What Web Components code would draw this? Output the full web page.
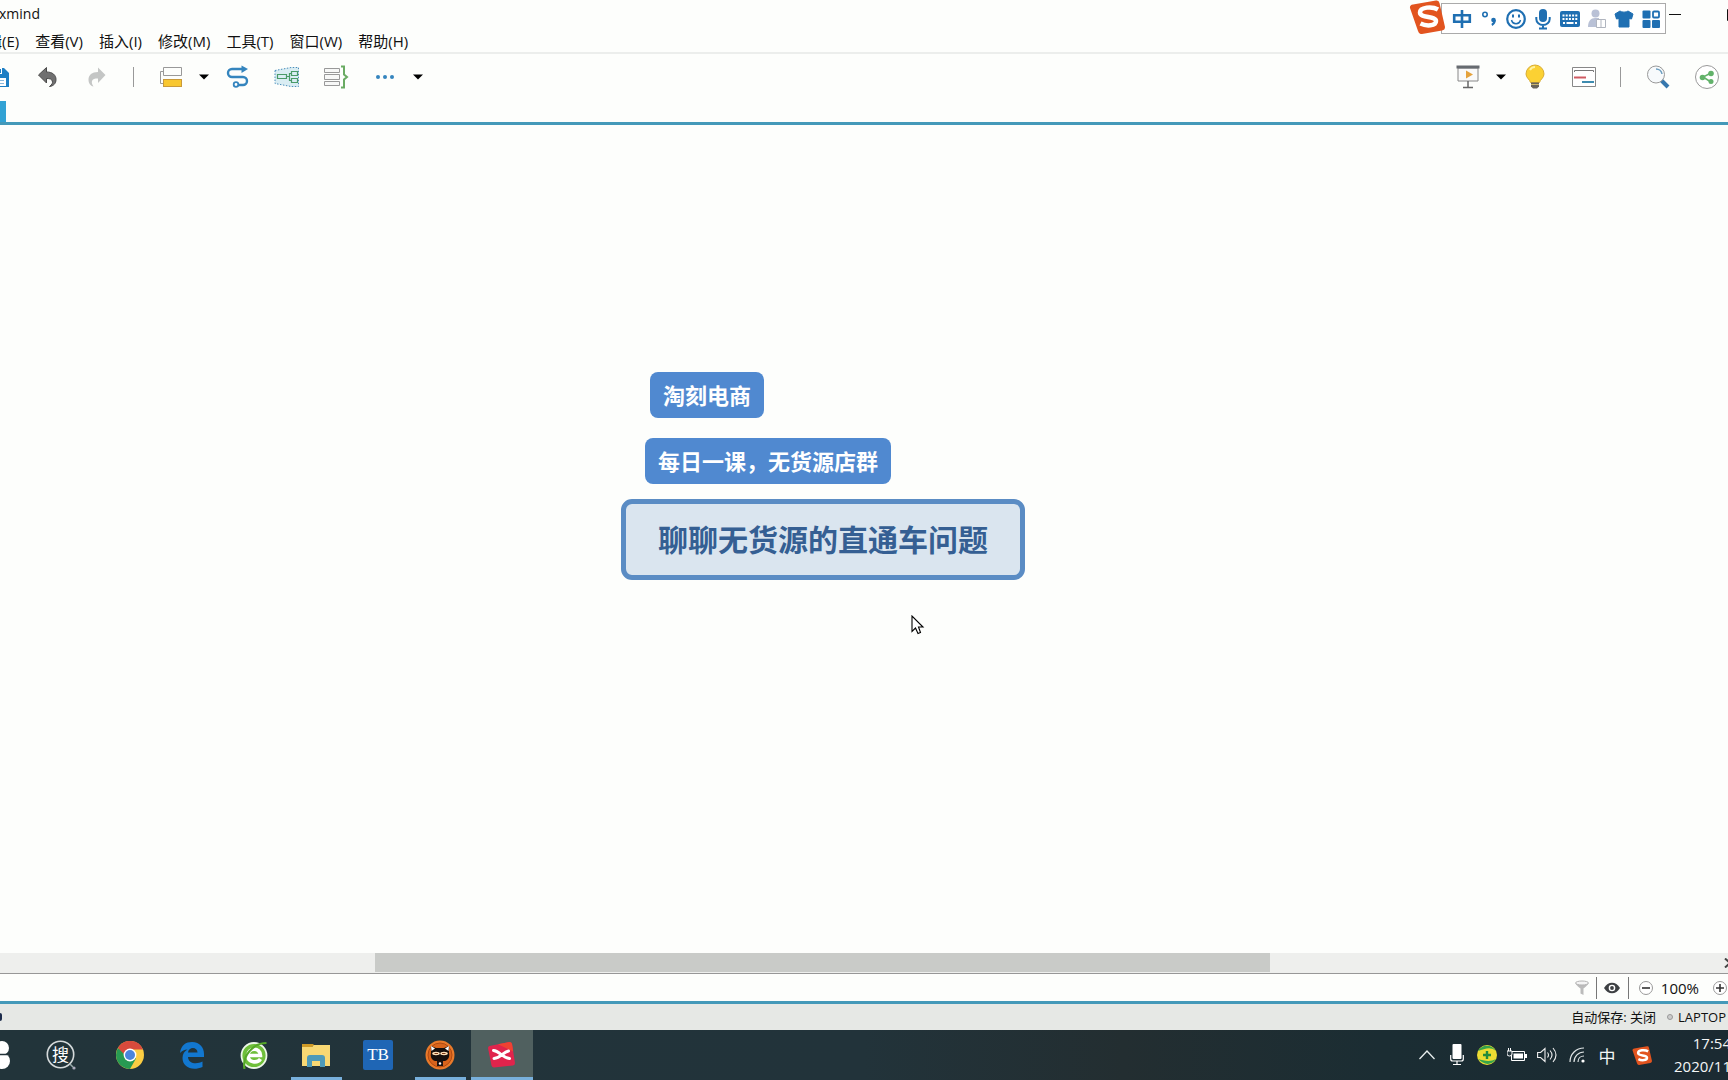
<!DOCTYPE html>
<html lang="zh-CN">
<head>
<meta charset="utf-8">
<title>xmind</title>
<style>
html, body { height: 100%; margin: 0; }
body { overflow: hidden; background: #fdfefc; color: #111; font-family: "Open Sans", "Noto Sans CJK SC", sans-serif; }
</style>
</head>
<body>
<xm-app></xm-app>
<script>
const ICONS = {
  save: [22, 22, `<path d="M1 2h15l5 5v14H1z" fill="#1f7fc4"/><path d="M5 2h9v6H5z" fill="#fff"/><path d="M10 3h3v4h-3z" fill="#1f7fc4"/><path d="M4 12h14v8H4z" fill="#fff"/><path d="M6 14.500h10M6 17.500h10" stroke="#8ab8dc"/>`],
  undo: [22, 22, `<path d="M1.500 9 9.500 1.500v4.500c6 0 9.500 3 9.500 7.500 0 4-2.500 6.500-6.500 7 2.500-2 3.500-3.500 2.800-5.500-.6-2-2.300-2.500-5.800-2.500V17z" fill="#707070" stroke="#4a4a4a"/>`],
  redo: [22, 22, `<path d="M19.500 9 12 1.500v4.500c-6 0-9.500 3-9.500 7.500 0 4 2 6.500 5 7-1.500-2-2-4-1.500-5.500.8-2 2.500-2.500 6-2.500V17z" fill="#c4c6c5"/>`],
  sep: [3, 22, `<path d="M1.500 1v20" stroke="#999"/>`],
  topic: [26, 24, `<path d="M5.500 2.500h18v8h-18zM5 6.500H2.500v12H5" fill="none" stroke="#999"/><rect x="5.500" y="14.500" width="18" height="7" fill="#f8c730" stroke="#c99a3a"/>`],
  caret: [10, 6, `<path d="M0 .5h10L5 5.500z" fill="#000"/>`],
  relation: [24, 24, `<path d="M17 5H6a4 4 0 0 0 0 8h11a4 4 0 0 1 0 8H12" fill="none" stroke="#3585be" stroke-width="2.400" transform="translate(0 -1)"/><path d="M15.500.5 22 4l-6.500 4z" fill="#3585be"/><circle cx="10" cy="19.500" r="2.300" fill="#fff" stroke="#3585be" stroke-width="1.800"/>`],
  boundary: [28, 24, `<path d="M2 5.500 18 2.500h7.500v19H18l-16-3z" fill="#d9edf3" stroke="#4a8ebb" stroke-dasharray="1.500 1.500"/><path d="M4.500 9.500h9v4h-9zM18.500 6.500h6v4h-6zM18.500 13.500h6v4h-6zM13.500 11.500h3M18.500 8.500h-2v7h2" fill="none" stroke="#4a9b68" stroke-width="1.200"/>`],
  summary: [26, 26, `<path d="M1.500 4.500h15v4h-15zM1.500 10.500h15v5h-15zM1.500 17.500h15v4h-15z" fill="#f7f8f7" stroke="#999"/><path d="M18 2.500h3v8l3 2.500-3 2.500v8h-3" fill="none" stroke="#6aab63" stroke-width="2"/>`],
  dots: [20, 6, `<g fill="#3585be"><circle cx="3" cy="3" r="2"/><circle cx="10" cy="3" r="2"/><circle cx="17" cy="3" r="2"/></g>`],
  present: [24, 24, `<path d="M2 3h20v13H2z" fill="#fafafa" stroke="#888"/><path d="M.5.5h23v3H.5z" fill="#666b70"/><path d="M10 5.500 17 9.500l-7 4z" fill="#e5a23c"/><path d="M12 16v6M7 22.500h10" stroke="#666" stroke-width="1.500"/>`],
  bulb: [20, 26, `<path d="M10 1a9 9 0 0 0-9 9c0 4 4 5.500 4.500 8.500h9C15 15.500 19 14 19 10a9 9 0 0 0-9-9z" fill="#fbd133" stroke="#d9ad34"/><path d="M5 6c1-2 3-3 5-3" fill="none" stroke="#fff2a0" stroke-width="2"/><path d="M6 18.500h8v4l-2 2H8l-2-2z" fill="#6a6458"/><path d="M6 20.500h8" stroke="#c9b46c"/>`],
  note: [24, 20, `<path d="M.5.5h23v19H.5z" fill="#fff" stroke="#888"/><path d="M2.500 5V3.500h19V5" fill="none" stroke="#777"/><path d="M2 10.500h12" stroke="#cf5a62" stroke-width="2"/><path d="M10 15h12" stroke="#3e8caf" stroke-width="2"/>`],
  search: [24, 24, `<path d="m15 15 7 7" stroke="#3678ae" stroke-width="4"/><circle cx="10" cy="9.500" r="8.500" fill="#f7fafc" stroke="#999"/><path d="M10 4a6 6 0 0 1 6 5" fill="none" stroke="#6c9ebf" stroke-width="1.500"/>`],
  share: [24, 24, `<circle cx="12" cy="12" r="11.500" fill="#fff" stroke="#999"/><path d="M16 8 8 12l8 5" fill="none" stroke="#62b26a" stroke-width="1.500"/><g fill="#62b26a"><circle cx="16" cy="8.500" r="2.800"/><circle cx="7.500" cy="12.500" r="2.800"/><circle cx="16" cy="16.500" r="2.500"/></g>`],
  sogou: [36, 34, `<path d="M4 4.500 27 .5q3-.5 3.500 2.500L36 27q0 3-3 3.500L13 34q-3 .5-4-3L1 8q-.5-3 3-3.500z" fill="#e2541f"/><path d="M29 9.500C23 6 11 7 11 12.500c0 6 16 3 16 8.500 0 5-9.500 5.500-15.500 2.500" fill="none" stroke="#fff" stroke-width="4.500"/>`],
  zhong: [20, 20, `<path d="M2.200 6.200h15.600v6.600H2.200zM10 1v18" fill="none" stroke="#1f6fb2" stroke-width="2.600"/>`],
  punct: [16, 16, `<circle cx="4" cy="3.500" r="2.200" fill="none" stroke="#1f6fb2" stroke-width="1.600"/><circle cx="12.500" cy="9" r="2.300" fill="#1f6fb2"/><path d="M13.800 9c0 2.500-1 4-3 5" fill="none" stroke="#1f6fb2" stroke-width="2"/>`],
  smile: [20, 20, `<circle cx="10" cy="10" r="8.800" fill="none" stroke="#1f6fb2" stroke-width="2.200"/><path d="M7 5.500v3M13 5.500v3" stroke="#1f6fb2" stroke-width="2"/><path d="M5.500 11a4.600 4.600 0 0 0 9 0" fill="none" stroke="#1f6fb2" stroke-width="1.500"/>`],
  mic: [16, 22, `<rect x="4" y="1" width="8" height="13" rx="4" fill="#1f6fb2"/><path d="M1.300 9v2a6.700 6 0 0 0 13.400 0V9M8 17v3M4 20.500h8" fill="none" stroke="#1f6fb2" stroke-width="2"/>`],
  keyboard: [20, 16, `<rect width="20" height="16" rx="2" fill="#1f6fb2"/><path d="M2.500 4.500h15M2.500 8h15" stroke="#fff" stroke-width="2" stroke-dasharray="2 1.200"/><path d="M3 12h2m1.500 0h7m1.500 0h2" stroke="#fff" stroke-width="2"/>`],
  user: [20, 20, `<circle cx="8.500" cy="4.500" r="4" fill="#b9c1d6"/><path d="M1 18c0-6 3-9 7-9h4v9z" fill="#b9c1d6"/><path d="M9.500 10.500h9v8h-9zM14 10.500v8" fill="#fff" stroke="#b0b5bf"/>`],
  shirt: [20, 18, `<path d="M6 1c1.500 1.500 6.500 1.500 8 0l5 3-1.500 5-2.500-.5V17H5V8.500L2.500 9 1 4z" fill="#1f6fb2" stroke="#1f6fb2" stroke-linejoin="round"/>`],
  grid: [18, 18, `<g fill="#1f6fb2"><rect x=".5" y=".5" width="8" height="8" rx="1"/><rect x=".5" y="10" width="8" height="8" rx="1"/><rect x="10" y="10" width="8" height="8" rx="1"/></g><rect x="11" y="1.500" width="6" height="6" rx="1" fill="#fff" stroke="#1f6fb2" stroke-width="1.800"/>`],
  min: [12, 2, `<path d="M0 .5h12" stroke="#111"/>`],
  max: [12, 12, `<path d="M.5.5h11v11H.5z" fill="none" stroke="#111"/>`],
  filter: [16, 16, `<path d="M1.500 3c0 2 5 5.500 5 5.500v5l3 1.500V8.500s5-3.500 5-5.500z" fill="#bbb"/><ellipse cx="8" cy="3" rx="6.500" ry="2" fill="#f4f4f4" stroke="#b5b5b5"/>`],
  eye: [16, 12, `<path d="M0 6c4-7 12-7 16 0-4 7-12 7-16 0z" fill="#3d4043"/><circle cx="8" cy="6" r="3.300" fill="#fff"/><circle cx="8" cy="6" r="1.900" fill="#3d4043"/>`],
  minus: [14, 14, `<circle cx="7" cy="7" r="6.500" fill="#fff" stroke="#999"/><path d="M3 7h8" stroke="#333" stroke-width="1.600"/>`],
  plus: [14, 14, `<circle cx="7" cy="7" r="6.500" fill="#fff" stroke="#999"/><path d="M3 7h8M7 3v8" stroke="#333" stroke-width="1.600"/>`],
  right: [8, 10, `<path d="m1 .5 5 4.500-5 4.500" fill="none" stroke="#444" stroke-width="2"/>`],
  start: [20, 28, `<g fill="#fff"><circle cx="3" cy="8" r="7"/><rect y="2" width="8" height="12" rx="5"/><circle cx="11" cy="7" r="7"/><circle cx="11" cy="20" r="8"/></g><path d="M4 13.500h13" stroke="#22333a" stroke-width="1.500"/>`],
  sou: [30, 30, `<circle cx="14.500" cy="14.500" r="13.200" fill="none" stroke="#d5dadb" stroke-width="1.600"/><circle cx="28" cy="28" r="1.600" fill="#aab"/><path d="m24 24 3 3" stroke="#9aa" stroke-width="1.500"/><text x="14.500" y="20.500" text-anchor="middle" font-size="17" fill="#fff" font-family="Noto Sans CJK SC">搜</text>`],
  chrome: [28, 28, `<circle cx="14" cy="14" r="14" fill="#fbcd42"/><path d="M14 14 1.900 7A14 14 0 0 0 14 28l6-10.500z" fill="#279a52"/><path d="M1.900 7 8 13l6-4.500h13A14 14 0 0 0 1.900 7z" fill="#d84a3c"/><circle cx="14" cy="14" r="6.400" fill="#fff"/><circle cx="14" cy="14" r="5" fill="#4a85dc"/>`],
  edge: [26, 28, `<path d="M1 12C2 4 7 1 13 1c8 0 12 6 12 12v3H9c.3 7 9 7.500 14.500 4.500v5.500C13 30.500 3.500 26 3.500 17c0-4 2-7 5-8.500-3 0-5.500 1.500-7.500 3.500zM9 11.500h9.500C18.500 5.500 9.500 5.500 9 11.500z" fill="#1277cf"/>`],
  green: [28, 28, `<circle cx="14" cy="14.500" r="12.500" fill="#6fbf3a" stroke="#edf6e8" stroke-width="1.800"/><path d="M8 14.500h12.500c0-8.500-12.500-8-12.500 0 0 7.500 9.500 8 12.500 3.500" fill="none" stroke="#fff" stroke-width="3.600"/><path d="M4.500 28C2 15 13 2 26.500 2" fill="none" stroke="#56a728" stroke-width="2.200"/>`],
  folder: [28, 24, `<path d="M0 1h11l2 2h-2l-2 2H0z" fill="#cf9a26"/><path d="M0 4h10l2-2h16v21H0z" fill="#f8d873"/><path d="M5 24V15q0-3 3-3h12q3 0 3 3v9h-5v-6h-8v6z" fill="#4e9ab8"/>`],
  tb: [30, 30, `<rect width="30" height="30" rx="2" fill="#1f66b5"/><text x="15" y="20" text-anchor="middle" font-size="17" fill="#fff" font-family="Liberation Serif">TB</text>`],
  cat: [30, 30, `<circle cx="15" cy="15" r="14.500" fill="#ea7a2a"/><circle cx="15" cy="15" r="12" fill="#d9641c" stroke="#b04a12"/><path d="M6 6l5 2h8l5-2v7c1 4-1 7-4 8H10c-3-1-5-4-4-8z" fill="#160f0e"/><path d="m6 6 4 2.500L6.500 11zM24 6l-4 2.500 3.500 2.500z" fill="#fff"/><ellipse cx="11" cy="13.500" rx="3.800" ry="1.700" fill="#ffe0b8"/><ellipse cx="19" cy="13.500" rx="3.800" ry="1.700" fill="#ffe0b8"/><path d="M9.500 13.500h3.500M17 13.500h3.500" stroke="#7a3a1a"/><path d="M12 21h6v5h-6z" fill="#1d1412"/><circle cx="15" cy="23.500" r="1.200" fill="#fff"/>`],
  xmind: [28, 28, `<path d="m1.500 5 20-4q2 0 2.500 2l3 19q0 2-2 2.500l-19 2q-2 0-2.500-2L0 7q0-1.500 1.500-2z" fill="#e0244c"/><path d="m10 3.300 11.500-2.300q2 0 2.500 2l1.200 7.500z" fill="#f04232"/><path d="M5.500 9.500c6 .5 8.500 7 16 8M6 17.500c7-.5 9-6.500 14.500-7.500" fill="none" stroke="#fff" stroke-width="3" stroke-linecap="round"/>`],
  up: [16, 10, `<path d="m.5 9 7.500-8 7.500 8" fill="none" stroke="#e8eeee" stroke-width="1.300"/>`],
  mic2: [14, 22, `<rect x="2.500" y="0" width="9" height="15" rx="1" fill="#fff"/><path d="M.7 11v4q0 2 2 2h8.600q2 0 2-2v-4M7 17v4M3 20.500h8" fill="none" stroke="#fff" stroke-width="1.200"/>`],
  guard: [20, 20, `<circle cx="10" cy="10" r="10" fill="#eddc32"/><path d="M1 6C4 0 14-2 19 6 13 1 8 4 1 6zM1 14c6 6 13 7 18 0-5 3-12 2-18 0z" fill="#36a44b"/><path d="M10 6v8M6 10h8" stroke="#258b3c" stroke-width="2.400"/>`],
  battery: [20, 14, `<path d="M4.500 3.500h13v9h-13z" fill="none" stroke="#fff"/><path d="M6.500 5.500h9.500v5H6.500zM18 6h2v4h-2z" fill="#fff"/><path d="M0 3h5v3q0 2-2.500 2T0 6zM1.500 0v3M3.500 0v3" fill="#22333a" stroke="#fff"/>`],
  volume: [20, 16, `<path d="M.6 5.500h3L8 1.500v13l-4.400-4h-3zM10.500 5.500q2 2.500 0 5M13 3.500q4 4.500 0 9M16 1q6 7 0 14" fill="none" stroke="#eee" stroke-width="1.100"/>`],
  wifi: [16, 16, `<g fill="none" stroke="#dfe4e5" stroke-width="1.200"><path d="M1 15C1 7 7 1 15 1"/><path d="M5 15C5 9.500 9.500 5 15 5" /><path d="M9 15c0-3.500 2.500-6 6-6"/></g><circle cx="14" cy="14" r="1.600" fill="#fff"/>`],
  pointer: [14, 20, `<path d="M1 1v15.500l3.500-3.500 2.500 5.500 2.500-1L7.500 12H12z" fill="#fff" stroke="#000" stroke-width="1.100"/>`]
};

const define = (name, css, html) => customElements.define(name, class extends HTMLElement {
  connectedCallback() {
    if (this.shadowRoot) return;
    const root = this.attachShadow({ mode: "open" });
    root.innerHTML = `<style>*{box-sizing:border-box}button{border:0;background:none;padding:0;margin:0;font:inherit;color:inherit;display:flex;align-items:center;justify-content:center}${css}</style>${typeof html === "function" ? html(this) : html}`;
  }
});

define("xm-icon", `:host{display:block;flex:none}svg{display:block}`, el => {
  const [w, h, body] = ICONS[el.getAttribute("name")];
  return `<svg width="${el.getAttribute("w") || w}" height="${el.getAttribute("h") || h}" viewBox="0 0 ${w} ${h}" aria-hidden="true">${body}</svg>`;
});

define("xm-tool", `:host{display:block;flex:none;width:49px;height:46px}:host([kind=caret]){width:18px}:host([kind=sep]){width:25px}button,div{width:100%;height:100%;display:flex;align-items:center;justify-content:center}`, el => {
  const icon = el.getAttribute("icon");
  return icon === "sep" ? `<div><xm-icon name="sep"></xm-icon></div>`
    : `<button aria-label="${icon}"><xm-icon name="${icon}"></xm-icon></button>`;
});

define("xm-titlebar", `:host{display:flex;height:30px;align-items:center;justify-content:space-between;font-size:14px}
h1{font:inherit;line-height:28px;height:30px;margin:0 0 0 -1px}
.win{display:flex;align-items:center;gap:46px;margin-right:-11px}
.win button{height:12px}`,
`<h1>xmind</h1><div class="win"><button aria-label="minimize"><xm-icon name="min"></xm-icon></button><button aria-label="maximize"><xm-icon name="max"></xm-icon></button></div>`);

define("xm-menubar", `:host{display:block;height:24px;border-bottom:2px solid #eceeec}nav{display:flex;gap:16px;margin-left:-28px;font-size:15px;line-height:22px;white-space:nowrap}`,
`<nav>${["编辑(E)", "查看(V)", "插入(I)", "修改(M)", "工具(T)", "窗口(W)", "帮助(H)"].map(t => `<button>${t}</button>`).join("")}</nav>`);

const tools = list => list.split(" ").map(n => `<xm-tool icon="${n}"${n === "caret" || n === "sep" ? ` kind="${n}"` : ""}></xm-tool>`).join("");
define("xm-toolbar", `:host{display:flex;justify-content:space-between;height:46px}div{display:flex}.l{margin-left:-26px}.r{margin-right:-3px}`,
`<div class="l">${tools("save undo redo sep topic caret relation boundary summary dots caret")}</div><div class="r">${tools("present caret bulb note sep search share")}</div>`);

define("xm-tabs", `:host{display:flex;align-items:flex-end;height:25px;border-bottom:3px solid #4499b9}span{width:6px;height:21px;background:#32a2d4}`, `<span></span>`);

define("xm-ime", `:host{position:absolute;top:0;right:62px;display:flex;align-items:center}
.bar{display:flex;align-items:center;height:31px;margin:3px 0 0 -4px;padding:0 1px 0 6px;background:#fff;border:1px solid #aaa}
button{width:27px;height:29px}xm-icon.logo{position:relative;z-index:1}`,
`<xm-icon class="logo" name="sogou"></xm-icon><div class="bar">${["zhong", "punct", "smile", "mic", "keyboard", "user", "shirt", "grid"].map(n => `<button aria-label="${n}"><xm-icon name="${n}"></xm-icon></button>`).join("")}</div>`);

define("xm-node", `:host{position:absolute;display:block;padding:0 13px;border-radius:8px;background:#5089d0;color:#fff;font-size:22px;font-weight:700;line-height:46px;white-space:nowrap}
:host([central]){padding:0 32px;border:5px solid #5a8cc4;border-radius:11px;background:#dae5ef;color:#355f93;font-size:30px;line-height:71px}`, `<slot></slot>`);

define("xm-canvas", `:host{position:relative;display:block;flex:1;min-height:0}
.a{left:650px;top:247px}.b{left:645px;top:313px}.c{left:621px;top:374px}.p{position:absolute;left:911px;top:490px}`,
`<xm-node class="a">淘刻电商</xm-node><xm-node class="b">每日一课，无货源店群</xm-node><xm-node class="c" central>聊聊无货源的直通车问题</xm-node><xm-icon class="p" name="pointer"></xm-icon>`);

define("xm-scroll", `:host{display:flex;align-items:stretch;height:21px;background:#eeefed;border-bottom:1px solid #979797}
.before{flex:375}.thumb{flex:895;background:#c9cbc8;margin-bottom:1px}.after{flex:458;display:flex;align-items:center;justify-content:flex-end}button{margin-right:-4px}`,
`<div class="before"></div><div class="thumb"></div><div class="after"><button aria-label="scroll right"><xm-icon name="right"></xm-icon></button></div>`);

define("xm-zoombar", `:host{display:flex;align-items:center;justify-content:flex-end;height:30px;border-bottom:3px solid #4499b9;font-size:15px}
.f{margin-right:6px}.e{height:22px;width:33px;border:solid #777;border-width:0 1px;margin-right:10px}span{margin:0 14px 0 8px}.plus{margin-right:1px}`,
`<button class="f" aria-label="filter"><xm-icon name="filter"></xm-icon></button><button class="e" aria-label="view"><xm-icon name="eye"></xm-icon></button><button aria-label="zoom out"><xm-icon name="minus"></xm-icon></button><span>100%</span><button class="plus" aria-label="zoom in"><xm-icon name="plus"></xm-icon></button>`);

define("xm-status", `:host{display:flex;align-items:center;justify-content:space-between;height:26px;background:#e6e8e5;font-size:13px}
.l{width:2px;height:8px;border-radius:0 4px 4px 0;background:#1d2c4c}.r{display:flex;align-items:center;white-space:nowrap;margin-right:2px;line-height:24px;height:26px}
i{width:6px;height:6px;border:1px solid #999;border-radius:3px;background:#ccc;margin:0 5px 0 11px}`,
`<span class="l"></span><div class="r"><span>自动保存: 关闭</span><i></i><span>LAPTOP</span></div>`);

define("xm-task", `:host{display:block;width:62px;height:50px}button{width:100%;height:100%;position:relative}
:host([open]) button::after{content:"";position:absolute;bottom:0;left:6px;right:5px;height:3px;background:#78b0dc}
:host([active]){background:#50605f}:host([active]) button::after{left:0;right:0}`,
el => `<button aria-label="${el.getAttribute("icon")}"><xm-icon name="${el.getAttribute("icon")}"></xm-icon></button>`);

define("xm-taskbar", `:host{display:flex;justify-content:space-between;height:50px;background:linear-gradient(90deg,#22343a 0,#22333a 50%,#232e31 65%,#1b2d33 80%,#1b2a32 100%);color:#f4f6f6;overflow:hidden}
.apps,.tray{display:flex;align-items:center}.start{width:37px;margin-left:-7px}.start button{justify-content:flex-start;margin-left:-2px}.gap{margin-right:7px}
.tray button{width:30px;height:50px;font-size:17px}.tray .s{width:40px}
.tray{margin-right:-3px}time{display:flex;flex-direction:column;align-items:flex-end;margin-left:12px;font-size:15px;line-height:23px;white-space:nowrap}
`,
`<div class="apps"><div class="start"><button aria-label="start"><xm-icon name="start"></xm-icon></button></div><xm-task icon="sou" class="gap"></xm-task><xm-task icon="chrome"></xm-task><xm-task icon="edge"></xm-task><xm-task icon="green"></xm-task><xm-task icon="folder" open></xm-task><xm-task icon="tb"></xm-task><xm-task icon="cat" open></xm-task><xm-task icon="xmind" open active></xm-task></div>
<div class="tray">${["up", "mic2", "guard", "battery", "volume", "wifi"].map(n => `<button aria-label="${n}"><xm-icon name="${n}"></xm-icon></button>`).join("")}<button>中</button><button class="s" aria-label="sogou"><xm-icon name="sogou" w="20" h="19"></xm-icon></button><time><span>17:54</span><span>2020/11</span></time></div>`);

define("xm-app", `:host{position:relative;display:flex;flex-direction:column;height:100vh;overflow:hidden}`,
`<xm-titlebar></xm-titlebar><xm-menubar></xm-menubar><xm-toolbar></xm-toolbar><xm-tabs></xm-tabs><xm-canvas></xm-canvas><xm-scroll></xm-scroll><xm-zoombar></xm-zoombar><xm-status></xm-status><xm-taskbar></xm-taskbar><xm-ime></xm-ime>`);
</script>
</body>
</html>
